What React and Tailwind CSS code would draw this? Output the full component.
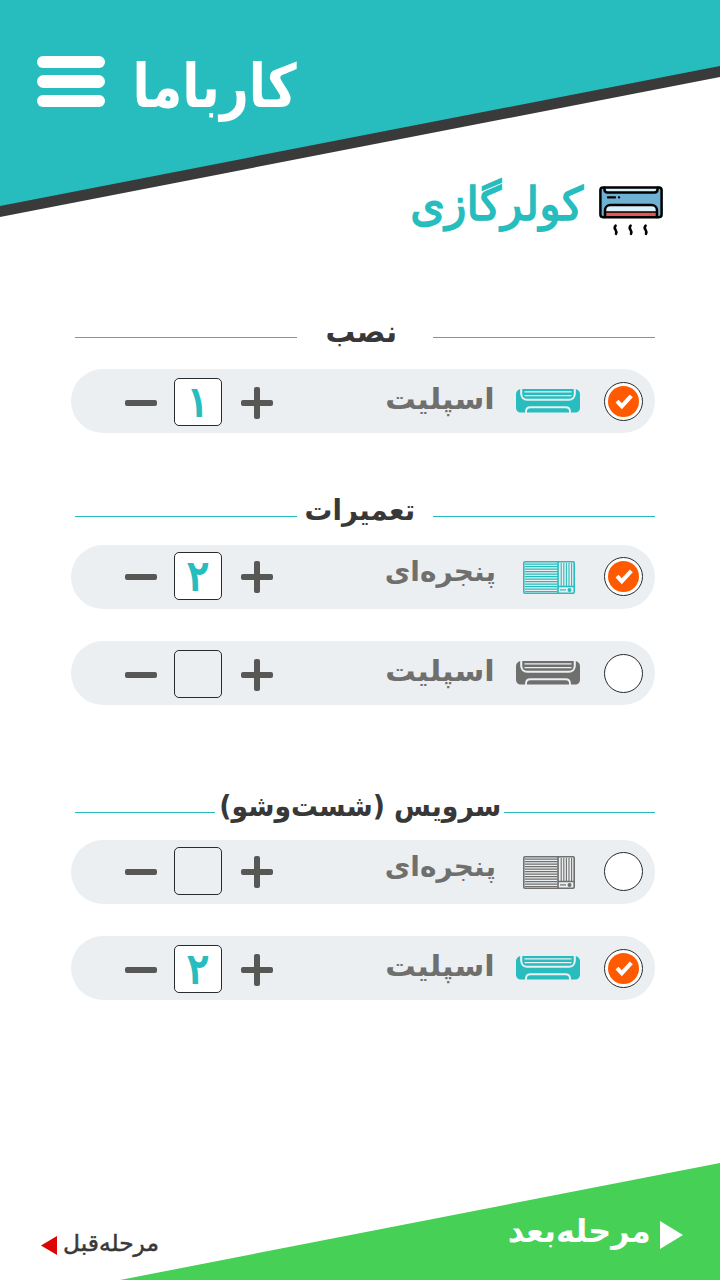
import { useState } from "react";
import clsx from "clsx";

const initialSections = [
  {
    id: "install",
    title: "نصب",
    items: [{ id: "install-split", type: "split", count: 1 }],
  },
  {
    id: "repair",
    title: "تعمیرات",
    items: [
      { id: "repair-window", type: "window", count: 2 },
      { id: "repair-split", type: "split", count: 0 },
    ],
  },
  {
    id: "service",
    title: "سرویس (شست‌وشو)",
    items: [
      { id: "service-window", type: "window", count: 0 },
      { id: "service-split", type: "split", count: 2 },
    ],
  },
];

// spacing around every section heading
const sectionStyles = {
  install: {
    wrap: "gap-[25px]",
    left: "w-[222px]",
    right: "w-[222px]",
    cell: "pr-2",
    text: "text-[30px] scale-x-[0.985]",
  },
  repair: {
    wrap: "gap-[22px] mt-[62px]",
    left: "w-[222px]",
    right: "w-[222px]",
    cell: "pr-2.5",
    text: "text-[29px] scale-x-[0.955]",
  },
  service: {
    wrap: "gap-[21px] mt-[86px]",
    left: "w-[140px]",
    right: "w-[151px]",
    cell: "pl-0.5",
    text: "text-[29px] scale-x-[0.92]",
  },
};

const toPersian = (n) => String(n).replace(/\d/g, (d) => "۰۱۲۳۴۵۶۷۸۹"[d]);

function CoolerIcon() {
  return (
    <svg width="64" height="50" viewBox="0 0 64 50" fill="none">
      <rect x="1.4" y="1.4" width="61.2" height="29.8" rx="2.6" fill="#6fb1d3" />
      <path d="M5.5 1.4h53v2.2c0 1.6-1.2 2.9-2.9 2.9H8.4c-1.7 0-2.9-1.3-2.9-2.9z" fill="#d9eef7" />
      <path d="M6 31v-6.6c0-3.1 2.3-5.4 5.4-5.4h41.2c3.1 0 5.4 2.3 5.4 5.4V31z" fill="#d9f1f8" />
      <path d="M6.5 26h51v5h-51z" fill="#e5565a" />
      <g stroke="#000" strokeWidth="2.5" strokeLinecap="round" strokeLinejoin="round">
        <rect x="1.4" y="1.4" width="61.2" height="29.8" rx="2.6" />
        <path d="M5.5 1.8v1.8c0 1.7 1.2 2.9 2.9 2.9h47.2c1.7 0 2.9-1.2 2.9-2.9V1.8" />
        <path d="M6 31v-6.6c0-3.1 2.3-5.4 5.4-5.4h41.2c3.1 0 5.4 2.3 5.4 5.4V31" />
        <path d="M6.5 26h51" strokeWidth="1.3" />
        <path d="M9 11.4h7M20 11.4h.1" strokeWidth="2.3" />
      </g>
      <g stroke="#000" strokeWidth="2.6" strokeLinecap="round">
        <path d="M16.600 39.600c-1.800 1.900-.9 3.200 0 4.400 .9 1.200 1 2.400 .4 3.800" />
        <path d="M31.600 39.600c-1.800 1.900-.9 3.200 0 4.400 .9 1.200 1 2.400 .4 3.800" />
        <path d="M46.600 39.600c-1.800 1.900-.9 3.200 0 4.400 .9 1.200 1 2.400 .4 3.800" />
      </g>
    </svg>
  );
}

function SplitIcon() {
  return (
    <svg width="64" height="24" viewBox="0 0 64 24" fill="none">
      <path
        d="M4 0h56c2.500 1 4 2.800 4 5v13.500c0 3-2 5-5 5H5c-3 0-5-2-5-5V5c0-2.200 1.500-4 4-5z"
        fill="currentColor"
      />
      <g stroke="#ebeff2">
        <path d="M5.200 0v4.500c0 3.700 2.300 6.300 6 6.300h41.600c3.700 0 6-2.600 6-6.300V0" strokeWidth="2.100" />
        <path d="M8.500 2.900h47M8.500 6.600h47" strokeWidth="1.400" />
        <path d="M10 24v-1.500c0-2.800 1.700-4.300 4.500-4.300h35c2.800 0 4.500 1.500 4.500 4.300V24" strokeWidth="1.900" />
      </g>
    </svg>
  );
}

function WindowIcon() {
  return (
    <svg width="52" height="33" viewBox="0 0 52 33" fill="none" stroke="currentColor">
      <rect x=".8" y=".8" width="50.400" height="31.400" rx="1.200" strokeWidth="1.600" />
      <path
        d="M2 3.200h32M2 5.700h32M2 8.200h32M2 10.700h32M2 13.200h32M2 15.700h32M2 18.200h32M2 20.700h32M2 23.200h32M2 25.700h32M2 28.200h32M2 30.500h32"
        strokeWidth="1.200"
      />
      <path d="M35 1v31M35 25.500h16" strokeWidth="1.700" />
      <path d="M38.200 2v23M40.800 2v23M43.400 2v23M46 2v23M48.600 2v23" strokeWidth="1.100" />
      <path d="M37 28.900h6" strokeWidth="1.200" />
      <circle cx="46.500" cy="28.900" r="2" fill="currentColor" stroke="none" />
    </svg>
  );
}

const types = {
  split: {
    label: "اسپلیت",
    icon: SplitIcon,
    stepper: "pt-0.5",
    text: "text-[29px] scale-x-[1.045] mt-4 mr-[21px]",
    iconBox: "",
    radio: "mt-[13px]",
  },
  window: {
    label: "پنجره‌ای",
    icon: WindowIcon,
    stepper: "pb-0.5",
    text: "text-[28px] mt-[13px] mr-5",
    iconBox: "pt-px pl-0.5",
    radio: "mt-3",
  },
};

function ServiceRow({ item, onChange }) {
  const type = types[item.type];
  const Icon = type.icon;
  const active = item.count > 0;

  return (
    <div className="w-[584px] h-16 rounded-full bg-[#ebeff2] flex items-center pl-[54px] pr-3">
      {/* STEPPER */}
      <div className={clsx("flex items-center", type.stepper)}>
        <button
          onClick={() => onChange(Math.max(0, item.count - 1))}
          className="mt-0.5 w-8 h-8 flex items-center justify-center"
        >
          <span className="w-8 h-1.5 rounded-[2px] bg-[#575756]" />
        </button>
        <div
          className={clsx(
            "w-12 h-12 pt-[3px] ml-[17px] mr-[19px] rounded-[5px] border border-[#2b2b2b] flex justify-center",
            active && "bg-white"
          )}
        >
          {active && (
            <span className="text-[41px] leading-none text-[#27bdbe] [-webkit-text-stroke:1.8px_#27bdbe]">
              {toPersian(item.count)}
            </span>
          )}
        </div>
        <button
          onClick={() => onChange(item.count + 1)}
          className="mt-0.5 w-8 h-8 grid place-items-center"
        >
          <span className="col-start-1 row-start-1 w-8 h-1.5 rounded-[2px] bg-[#575756]" />
          <span className="col-start-1 row-start-1 w-1.5 h-8 rounded-[2px] bg-[#575756]" />
        </button>
      </div>

      {/* LABEL */}
      <span
        className={clsx(
          "ml-auto self-start whitespace-nowrap origin-right font-bold leading-none text-[#6f6f6e]",
          type.text
        )}
      >
        {type.label}
      </span>

      {/* ICON */}
      <div
        className={clsx(
          "w-16 mr-6 flex justify-center items-center",
          type.iconBox,
          active ? "text-[#27bdbe]" : "text-[#6f6f6e]"
        )}
      >
        <Icon />
      </div>

      {/* RADIO */}
      <button
        onClick={() => onChange(active ? 0 : 1)}
        className={clsx(
          "self-start w-[39px] h-[39px] rounded-full border border-[#2b2b2b] bg-white flex items-center justify-center",
          type.radio
        )}
      >
        {active && (
          <span className="w-[31px] h-[31px] rounded-full bg-[#ff5a00] flex items-center justify-center">
            <svg width="19" height="17" viewBox="0 0 19 17" fill="none">
              <path d="M3 8.200l4.800 5L17.300 2.800" stroke="#fff" strokeWidth="4" />
            </svg>
          </span>
        )}
      </button>
    </div>
  );
}

export default function App() {
  const [sections, setSections] = useState(initialSections);

  const setCount = (id, count) =>
    setSections((prev) =>
      prev.map((s) => ({
        ...s,
        items: s.items.map((i) => (i.id === id ? { ...i, count } : i)),
      }))
    );

  return (
    <div className="relative isolate w-[720px] h-[1280px] overflow-hidden bg-white flex flex-col font-['DejaVu_Sans',sans-serif]">
      {/* SLANTED HEADER BACKGROUND */}
      <div className="absolute -z-10 inset-x-0 top-0 h-[217px] bg-[#3a3a3a] [clip-path:polygon(0_0,100%_0,100%_77px,0_217px)]">
        <div className="h-full bg-[#27bdbe] [clip-path:polygon(0_0,100%_0,100%_66px,0_206px)]" />
      </div>

      {/* HEADER */}
      <header className="h-[166px] pl-[37px] pt-14 flex items-start">
        <button className="w-[68px] flex flex-col gap-[7px]">
          <span className="h-3 rounded-full bg-white" />
          <span className="h-[13px] rounded-full bg-white" />
          <span className="h-3 rounded-full bg-white" />
        </button>
        <div className="w-48 flex justify-end">
          <h1 className="whitespace-nowrap origin-right scale-x-[0.835] text-[60px] leading-none font-bold text-white">
            کارباما
          </h1>
        </div>
      </header>

      {/* TITLE */}
      <div className="h-[150px] pt-[15px] pr-[57px] flex justify-end items-start gap-4">
        <h2 className="whitespace-nowrap origin-right scale-x-[0.965] text-[46px] leading-none text-[#27bdbe] [-webkit-text-stroke:1.6px_#27bdbe]">
          کولرگازی
        </h2>
        <div className="pt-[5px]">
          <CoolerIcon />
        </div>
      </div>

      {/* SECTIONS */}
      {sections.map((section) => {
        const style = sectionStyles[section.id];

        return (
          <section key={section.id} className={clsx("pl-[71px] flex flex-col", style.wrap)}>
            <div className="w-[580px] h-7 ml-1 flex items-start">
              <span className={clsx("h-px mt-[21px] shrink-0 bg-[#27bdbe]", style.left)} />
              <div className={clsx("flex-1 min-w-0 pt-px flex justify-center", style.cell)}>
                <h3
                  className={clsx(
                    "whitespace-nowrap leading-none font-bold text-[#383838]",
                    style.text
                  )}
                  dir="rtl"
                >
                  {section.title}
                </h3>
              </div>
              <span className={clsx("h-px mt-[21px] shrink-0 bg-[#27bdbe]", style.right)} />
            </div>
            <div className="flex flex-col gap-8">
              {section.items.map((item) => (
                <ServiceRow key={item.id} item={item} onChange={(n) => setCount(item.id, n)} />
              ))}
            </div>
          </section>
        );
      })}

      {/* FOOTER */}
      <footer className="relative isolate mt-auto h-[117px] pl-[41px] pr-[37px] flex justify-between items-start">
        <div className="absolute -z-10 inset-0 bg-[#47d056] [clip-path:polygon(100%_0,100%_100%,120px_100%)]" />
        <button className="mt-[69px] flex items-start gap-1.5">
          <svg width="16" height="19" viewBox="0 0 16 19" className="mt-1">
            <path d="M0 9.500L16 0v19z" fill="#dc0404" />
          </svg>
          <span className="whitespace-nowrap origin-left scale-x-[1.015] text-[23px] leading-none text-[#383838] [-webkit-text-stroke:0.5px_#383838]">
            مرحله‌قبل
          </span>
        </button>
        <button className="mt-[52px] flex items-start gap-[9px]">
          <span className="whitespace-nowrap origin-right scale-x-[0.995] text-[32px] leading-none font-bold text-white">
            مرحله‌بعد
          </span>
          <svg width="23" height="28" viewBox="0 0 23 28" className="mt-1.5">
            <path d="M0 0l23 14L0 28z" fill="#fff" />
          </svg>
        </button>
      </footer>
    </div>
  );
}
